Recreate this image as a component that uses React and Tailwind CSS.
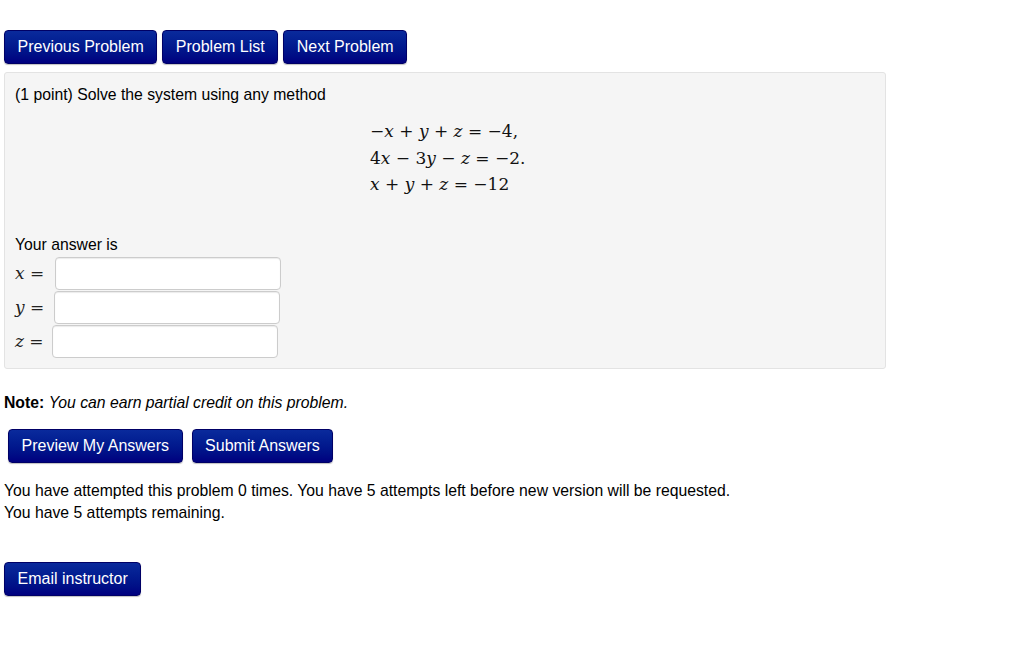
const btn =
  "rounded-[4px] border border-[#000066] bg-gradient-to-b from-[#0a2a9c] to-[#00007f] text-white text-[16px] leading-[20px] px-[12.5px] py-[6px] shadow-[0_1px_1px_rgba(0,0,0,0.25)]";

function MathLine({ children }) {
  return <div className="h-[26.5px] leading-[26.5px]">{children}</div>;
}

function V({ children }) {
  return <span className="italic">{children}</span>;
}

function AnswerRow({ v, indent }) {
  return (
    <div className="flex items-center h-[34px]">
      <span
        className="w-[40px] text-[17px] text-[#222]"
        style={{ fontFamily: '"DejaVu Serif", serif' }}
      >
        <V>{v}</V> =
      </span>
      <input
        type="text"
        className={`h-[33px] w-[226px] rounded-[4px] border border-[#cccccc] bg-white shadow-[inset_0_1px_1px_rgba(0,0,0,0.08)] ${indent}`}
      />
    </div>
  );
}

export default function App() {
  return (
    <div
      className="min-h-[655px] w-[1019px] bg-white text-black text-[15.75px]"
      style={{ fontFamily: '"Liberation Sans", Arial, sans-serif' }}
    >
      <div className="pt-[30px] pl-[4px] flex gap-[5px]">
        <button className={btn}>Previous Problem</button>
        <button className={btn}>Problem List</button>
        <button className={btn}>Next Problem</button>
      </div>

      <div className="mt-[8px] ml-[4px] w-[882px] h-[297px] rounded-[3px] border border-[#e3e3e3] bg-[#f5f5f5] px-[10px] pt-[12px]">
        <div className="leading-[20px]">(1 point) Solve the system using any method</div>
        <div
          className="mt-[13px] ml-[355px] text-[17px] text-[#111]"
          style={{ fontFamily: '"DejaVu Serif", serif' }}
        >
          <MathLine>
            −<V>x</V> + <V>y</V> + <V>z</V> = −4,
          </MathLine>
          <MathLine>
            4<V>x</V> − 3<V>y</V> − <V>z</V> = −2.
          </MathLine>
          <MathLine>
            <V>x</V> + <V>y</V> + <V>z</V> = −12
          </MathLine>
        </div>
        <div className="mt-[37px] leading-[20px]">Your answer is</div>
        <div className="mt-[2px]">
          <AnswerRow v="x" indent="ml-0" />
          <AnswerRow v="y" indent="ml-[-1px]" />
          <AnswerRow v="z" indent="ml-[-3px]" />
        </div>
      </div>

      <div className="mt-[24px] ml-[4px] leading-[20px]">
        <b>Note:</b> <i>You can earn partial credit on this problem.</i>
      </div>

      <div className="mt-[16px] ml-[8px] flex gap-[9px]">
        <button className={btn}>Preview My Answers</button>
        <button className={btn}>Submit Answers</button>
      </div>

      <div className="mt-[17px] ml-[4px] leading-[22px]">
        <div>You have attempted this problem 0 times. You have 5 attempts left before new version will be requested.</div>
        <div>You have 5 attempts remaining.</div>
      </div>

      <div className="mt-[38px] ml-[4px]">
        <button className={btn}>Email instructor</button>
      </div>
    </div>
  );
}
